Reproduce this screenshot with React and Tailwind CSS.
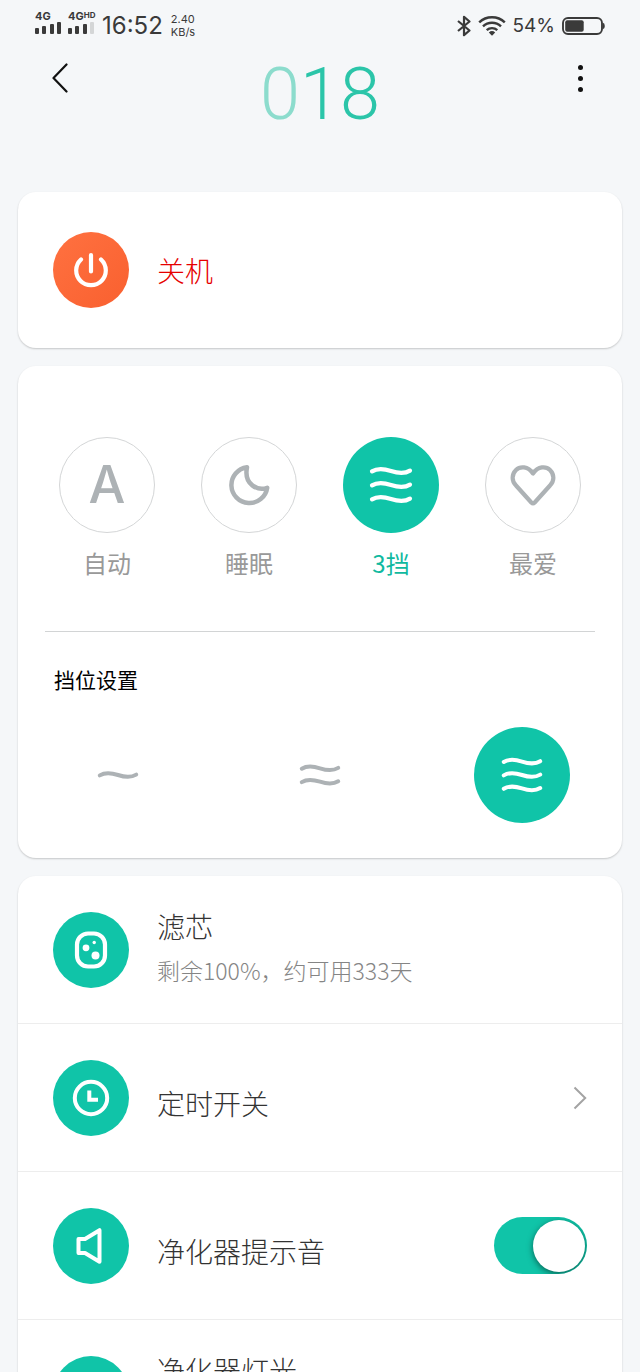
import React, { useState } from "react";
import clsx from "clsx";

const WAVE = "c5.5 -3.4 11 -3 19 -0.4 s13.5 3 19 -0.4";

function Waves({ count, gap = 14, className }) {
  const top = 24.4 - ((count - 1) * gap) / 2;
  return (
    <svg viewBox="0 0 48 48" className={className} fill="none" stroke="currentColor" strokeWidth="4.2" strokeLinecap="round">
      {Array.from({ length: count }, (_, i) => (
        <path key={i} d={`M5 ${top + i * gap}${WAVE}`} />
      ))}
    </svg>
  );
}

function MoonIcon() {
  return (
    <svg viewBox="0 0 48 48" className="size-12" fill="none" stroke="currentColor" strokeWidth="4.5" strokeLinejoin="round">
      <path d="M22 6.2A18 18 0 1 0 42.2 26.8C33 30 18.5 24 22 6.2Z" />
    </svg>
  );
}

function HeartIcon() {
  return (
    <svg viewBox="0 0 48 48" className="size-12" fill="none" stroke="currentColor" strokeWidth="4.2" strokeLinejoin="round">
      <path d="M24 12.5C19 5 11 5 7 9C2.5 13.5 2.5 20 7 24.5L22.3 41.5Q24 43.2 25.7 41.5L41 24.5C45.5 20 45.5 13.5 41 9C37 5 29 5 24 12.5Z" />
    </svg>
  );
}

function PowerIcon() {
  return (
    <svg viewBox="0 0 48 48" className="size-12" fill="none" stroke="currentColor" strokeWidth="4.2" strokeLinecap="round">
      <path d="M14 13.5a14.8 14.8 0 1 0 20 0M24 9v16.5" />
    </svg>
  );
}

function FilterIcon() {
  return (
    <svg viewBox="0 0 48 48" className="size-12" fill="none" stroke="currentColor" strokeWidth="4.2">
      <rect x="10" y="7.5" width="28" height="33" rx="11" />
      <g fill="currentColor" stroke="none">
        <circle cx="19" cy="21.8" r="3.4" />
        <circle cx="27.2" cy="16.5" r="1.7" />
        <circle cx="28.5" cy="29.6" r="4" />
      </g>
    </svg>
  );
}

function ClockIcon() {
  return (
    <svg viewBox="0 0 48 48" className="size-12" fill="none" stroke="currentColor" strokeWidth="4">
      <circle cx="24" cy="24" r="16.2" />
      <path d="M22.3 16.5V25.8H31" />
    </svg>
  );
}

function SpeakerIcon() {
  return (
    <svg viewBox="0 0 48 48" className="size-12" fill="none" stroke="currentColor" strokeWidth="4" strokeLinejoin="round">
      <path d="M11.5 17H18L32.5 8.2V39.8L18 31H11.5Z" />
    </svg>
  );
}

function LampIcon() {
  return (
    <svg viewBox="0 0 48 48" className="size-12" fill="none" stroke="currentColor" strokeWidth="4">
      <circle cx="24" cy="22" r="11" />
      <path d="M19 39h10" />
    </svg>
  );
}

function Signal({ bars, children }) {
  const heights = ["h-[6px]", "h-[8px]", "h-[10px]", "h-[12px]"];
  return (
    <div className="flex w-[26px] flex-col">
      <span className="text-[11px] leading-[9px] font-bold whitespace-nowrap">{children}</span>
      <div className="flex h-[13px] items-end justify-between">
        {heights.map((h, i) => (
          <i key={h} className={clsx("w-1 rounded-[1px]", h, i < bars ? "bg-[#3a3a3a]" : "bg-[#d4d6d7]")} />
        ))}
      </div>
    </div>
  );
}

function StatusBar() {
  return (
    <div className="flex h-[50px] shrink-0 items-center justify-between pt-[2px] pr-[35px] pl-[35px] font-[Inter,sans-serif] text-[#3a3a3a]">
      <div className="flex items-center">
        <div className="flex gap-[7px] pb-[6px]">
          <Signal bars={4}>4G</Signal>
          <Signal bars={3}>
            4G<sup className="top-0 align-top text-[8px] leading-[7px]">HD</sup>
          </Signal>
        </div>
        <span className="ml-2 text-[24px] leading-8">16:52</span>
        <div className="ml-2 text-[11px] leading-[13px]">
          <div>2.40</div>
          <div>KB/s</div>
        </div>
      </div>
      <div className="flex items-center gap-[7px]">
        <svg viewBox="0 0 14 22" className="h-[22px] w-[14px]" fill="none" stroke="currentColor" strokeWidth="2.2" strokeLinejoin="round">
          <path d="M1 6L12.5 15.5L7 20.2V1.8L12.5 6.5L1 16" />
        </svg>
        <svg viewBox="0 0 28 22" className="h-[22px] w-[28px]" fill="none" stroke="currentColor" strokeWidth="2.4">
          <path d="M1.2 7.4A18.5 18.5 0 0 1 26.8 7.4M5 11.4A13 13 0 0 1 23 11.4M8.7 15.2A7.8 7.8 0 0 1 19.3 15.2" />
          <path d="M10.8 17.4Q14 14.8 17.2 17.4L14 20.8Z" fill="currentColor" stroke="none" />
        </svg>
        <span className="text-[19px] leading-8">54%</span>
        <svg viewBox="0 0 43 18" className="h-[18px] w-[43px]" fill="none" stroke="currentColor" strokeWidth="1.9">
          <rect x="1" y="1" width="39" height="16" rx="5" />
          <rect x="3.2" y="3.2" width="18.5" height="11.6" rx="2" fill="currentColor" stroke="none" />
          <path d="M41 5.8Q42.8 6 42.8 9T41 12.2Z" fill="currentColor" stroke="none" />
        </svg>
      </div>
    </div>
  );
}

const modes = [
  { id: "auto", label: "自动", icon: <span className="font-[Inter,sans-serif] text-[52px] leading-none font-medium">A</span> },
  { id: "sleep", label: "睡眠", icon: <MoonIcon /> },
  { id: "level", label: "3挡", icon: <Waves count={3} className="size-12" /> },
  { id: "favorite", label: "最爱", icon: <HeartIcon /> },
];

function Badge({ children }) {
  return (
    <span className="flex size-[76px] shrink-0 items-center justify-center rounded-full bg-[#10c4a8] text-white">
      {children}
    </span>
  );
}

const card = "shrink-0 rounded-[18px] bg-white shadow-[0_1px_2px_rgba(0,0,0,0.2)]";
const row = "flex h-[148px] w-full items-center gap-7 border-b border-[#ededed] px-[35px] text-left";
const rowTitle = "text-[28px] leading-[44px] font-light text-[#333]";

export default function App() {
  const [mode, setMode] = useState("level");
  const [level, setLevel] = useState(3);
  const [sound, setSound] = useState(true);

  return (
    <div className="flex h-screen flex-col overflow-hidden bg-[#f5f7f9] font-['Noto_Sans_CJK_SC',sans-serif]">
      <StatusBar />

      <header className="mb-[59px] flex shrink-0 items-start justify-between px-10 pt-2">
        <button type="button" aria-label="返回" className="flex size-10 items-center justify-center text-[#111]">
          <svg viewBox="0 0 16 30" className="h-[30px] w-4" fill="none" stroke="currentColor" strokeWidth="2.2" strokeLinecap="round" strokeLinejoin="round">
            <path d="M14.5 1.5L1.5 15L14.5 28.5" />
          </svg>
        </button>
        <h1 className="font-[Roboto,sans-serif] text-[72px] leading-[74px] font-light text-[#2bc5a9]">
          <span className="text-[#8cdccd]">0</span>18
        </h1>
        <button type="button" aria-label="更多" className="flex size-10 flex-col items-center justify-center gap-[6px]">
          <i className="size-[5px] rounded-full bg-[#111]" />
          <i className="size-[5px] rounded-full bg-[#111]" />
          <i className="size-[5px] rounded-full bg-[#111]" />
        </button>
      </header>

      <main className="flex min-h-0 flex-1 flex-col gap-[18px] overflow-y-auto px-[18px] pt-px [scrollbar-width:none]">
        <section className={card}>
          <button type="button" className="flex h-[156px] w-full items-center gap-7 px-[35px]">
            <span className="flex size-[76px] items-center justify-center rounded-full bg-linear-to-br from-[#ff7140] to-[#f9602f] text-white">
              <PowerIcon />
            </span>
            <span className="text-[28px] leading-[44px] font-light text-[#e60000]">关机</span>
          </button>
        </section>

        <section className={clsx(card, "pt-[71px] pb-[35px]")}>
          <div className="flex justify-between px-[41px]">
            {modes.map((m) => (
              <button
                key={m.id}
                type="button"
                onClick={() => setMode(m.id)}
                className={clsx("flex flex-col items-center gap-[14px]", mode === m.id ? "text-[#10b99f]" : "text-[#999]")}
              >
                <span
                  className={clsx(
                    "flex size-24 items-center justify-center rounded-full",
                    mode === m.id ? "bg-[#10c4a8] text-white" : "border border-[#d4d6d7] text-[#adb2b5]"
                  )}
                >
                  {m.icon}
                </span>
                <span className="text-[24px] leading-8">{m.label}</span>
              </button>
            ))}
          </div>

          <hr className="mx-[27px] mt-[52px] border-t border-[#d2d4d5]" />

          <h2 className="mt-[31px] px-9 text-[21px] leading-8 text-black">挡位设置</h2>
          <div className="mt-8 flex justify-between px-[52px]">
            {[1, 2, 3].map((n) => (
              <button
                key={n}
                type="button"
                aria-label={`${n}挡`}
                onClick={() => setLevel(n)}
                className={clsx(
                  "flex size-24 items-center justify-center rounded-full",
                  level === n ? "bg-[#10c4a8] text-white" : "text-[#adb2b5]"
                )}
              >
                <Waves count={n} className="size-[46px]" />
              </button>
            ))}
          </div>
        </section>

        <section className={card}>
          <div className={row}>
            <Badge><FilterIcon /></Badge>
            <div className="pb-1">
              <div className={rowTitle}>滤芯</div>
              <div className="text-[23px] leading-[44px] font-light text-[#858585]">剩余100%，约可用333天</div>
            </div>
          </div>
          <button type="button" className={row}>
            <Badge><ClockIcon /></Badge>
            <span className={clsx(rowTitle, "flex-1 pt-[10px]")}>定时开关</span>
            <svg viewBox="0 0 14 24" className="h-6 w-[14px]" fill="none" stroke="#a3a3a3" strokeWidth="2">
              <path d="M1.5 1.5L12.2 12L1.5 22.5" />
            </svg>
          </button>
          <div className={row}>
            <Badge><SpeakerIcon /></Badge>
            <label htmlFor="sound" className={clsx(rowTitle, "flex-1 pt-[10px]")}>净化器提示音</label>
            <input
              id="sound"
              type="checkbox"
              role="switch"
              checked={sound}
              onChange={(e) => setSound(e.target.checked)}
              className="flex h-[57px] w-[93px] appearance-none items-center justify-start overflow-hidden rounded-full bg-[#d5d5d5] px-[2px] before:size-[52px] before:rounded-full before:bg-white before:shadow-[0_2px_6px_rgba(0,0,0,0.5)] checked:justify-end checked:bg-[#10c4a8]"
            />
          </div>
          <div className={row}>
            <Badge><LampIcon /></Badge>
            <div className="h-[92px]">
              <div className={rowTitle}>净化器灯光</div>
            </div>
          </div>
        </section>
      </main>
    </div>
  );
}
